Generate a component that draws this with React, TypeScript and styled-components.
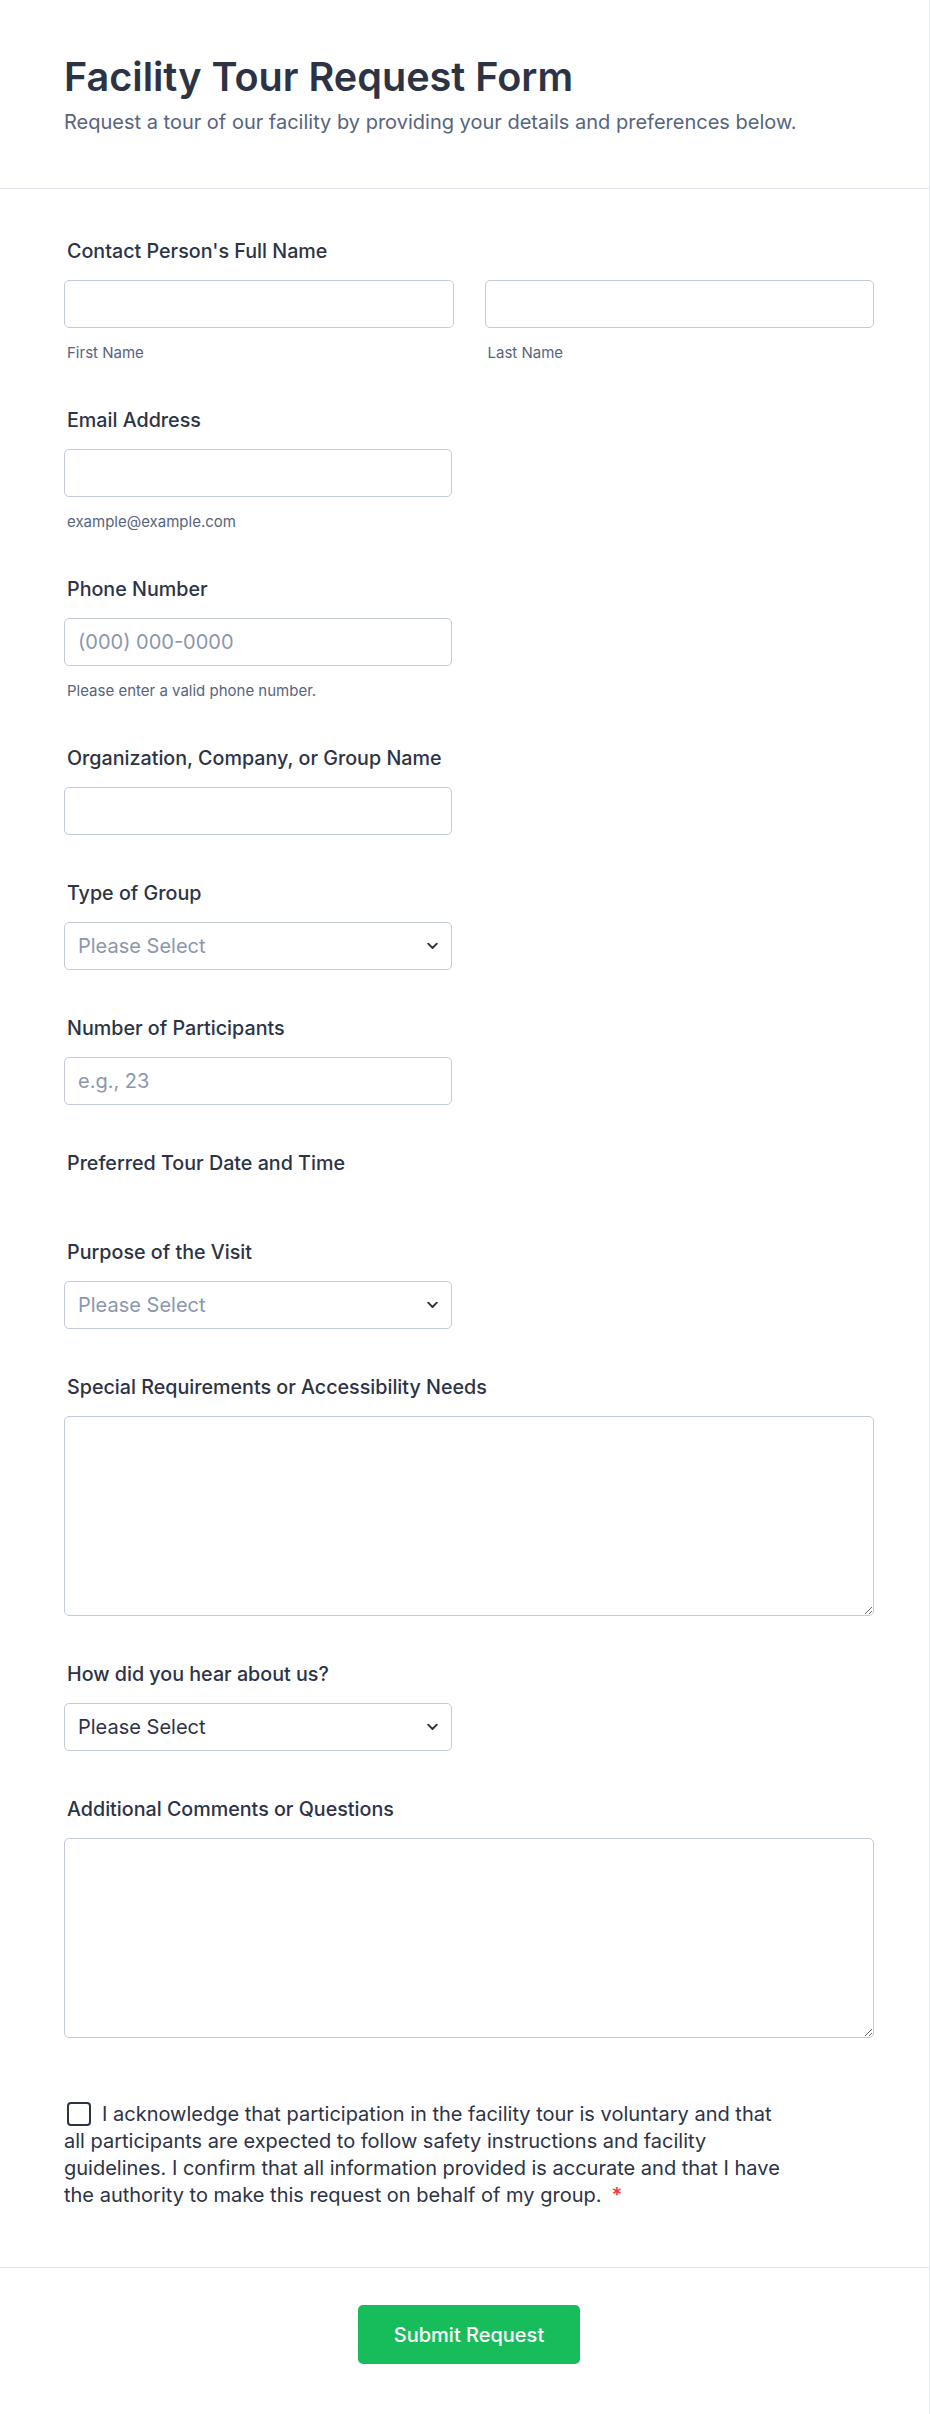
import styled, { createGlobalStyle } from 'styled-components';

const GlobalStyle = createGlobalStyle`
  * {
    box-sizing: border-box;
  }

  body {
    margin: 0;
    background: #fff;
    color: #2c3345;
    font-family: Inter, 'Noto Sans', sans-serif;
  }
`;

function Chevron() {
  return (
    <ChevronIcon width="11" height="7" viewBox="0 0 11 7" aria-hidden="true">
      <path
        d="M1.2 1.2l4.3 4.3 4.3-4.3"
        fill="none"
        stroke="#2c3345"
        strokeWidth="1.9"
        strokeLinecap="round"
        strokeLinejoin="round"
      />
    </ChevronIcon>
  );
}

function SelectBox({ muted }: { muted?: boolean }) {
  return (
    <SelectWrap>
      <Select defaultValue="" $muted={muted}>
        <option value="">Please Select</option>
      </Select>
      <Chevron />
    </SelectWrap>
  );
}

function App() {
  return (
    <>
      <GlobalStyle />
      <Page>
        <Header>
          <Title>Facility Tour Request Form</Title>
          <Subtitle>
            Request a tour of our facility by providing your details and
            preferences below.
          </Subtitle>
        </Header>

        <Body>
          <Field>
            <Label>Contact Person's Full Name</Label>
            <NameRow>
              <div>
                <Input type="text" />
                <SubLabel>First Name</SubLabel>
              </div>
              <div>
                <Input type="text" />
                <SubLabel>Last Name</SubLabel>
              </div>
            </NameRow>
          </Field>

          <Field>
            <Label>Email Address</Label>
            <Input type="email" $half />
            <SubLabel>example@example.com</SubLabel>
          </Field>

          <Field>
            <Label>Phone Number</Label>
            <Input type="tel" placeholder="(000) 000-0000" $half />
            <SubLabel>Please enter a valid phone number.</SubLabel>
          </Field>

          <Field>
            <Label>Organization, Company, or Group Name</Label>
            <Input type="text" $half />
          </Field>

          <Field>
            <Label>Type of Group</Label>
            <SelectBox muted />
          </Field>

          <Field>
            <Label>Number of Participants</Label>
            <Input type="text" placeholder="e.g., 23" $half />
          </Field>

          <Field>
            <Label>Preferred Tour Date and Time</Label>
            <DateSlot />
          </Field>

          <Field>
            <Label>Purpose of the Visit</Label>
            <SelectBox muted />
          </Field>

          <Field>
            <Label>Special Requirements or Accessibility Needs</Label>
            <TextArea />
          </Field>

          <Field>
            <Label>How did you hear about us?</Label>
            <SelectBox />
          </Field>

          <Field>
            <Label>Additional Comments or Questions</Label>
            <TextArea />
          </Field>

          <Consent>
            <ConsentText>
              <CheckBox type="checkbox" />
              I acknowledge that participation in the facility tour is voluntary
              and that all participants are expected to follow safety
              instructions and facility guidelines. I confirm that all
              information provided is accurate and that I have the authority to
              make this request on behalf of my group.
              <Required>*</Required>
            </ConsentText>
          </Consent>
        </Body>

        <Footer>
          <SubmitButton type="button">Submit Request</SubmitButton>
        </Footer>
      </Page>
    </>
  );
}

export default App;

const Page = styled.div`
  width: 930px;
  border-right: 1px solid #e6e8ef;
  background: #fff;
`;

const Header = styled.header`
  padding: 54px 55px 51px 64px;
  border-bottom: 1px solid #e3e5ec;
`;

const Title = styled.h1`
  margin: 0;
  font-size: 39.6px;
  font-weight: 600;
  line-height: 46px;
  color: #2c3345;
`;

const Subtitle = styled.p`
  margin: 7px 0 0;
  font-size: 20px;
  line-height: 30px;
  color: #57647e;
`;

const Body = styled.div`
  padding: 27px 55px 0 64px;
`;

const Field = styled.div`
  padding: 23px 0;
`;

const Label = styled.label`
  display: block;
  margin-bottom: 17px;
  padding-left: 3px;
  font-size: 19.7px;
  font-weight: 500;
  line-height: 24px;
  color: #2c3345;
`;

const NameRow = styled.div`
  display: grid;
  grid-template-columns: 1fr 1fr;
  column-gap: 31px;
`;

const Input = styled.input<{ $half?: boolean }>`
  display: block;
  width: ${({ $half }) => ($half ? '388px' : '100%')};
  height: 48px;
  padding: 0 13px;
  border: 1px solid #c3cad8;
  border-radius: 5px;
  background: #fff;
  font-family: inherit;
  font-size: 20px;
  color: #2c3345;
  outline: none;

  &::placeholder {
    color: #8c97ad;
  }
`;

const SubLabel = styled.span`
  display: block;
  margin-top: 16px;
  padding-left: 3px;
  font-size: 15px;
  line-height: 18px;
  color: #57647e;
`;

const DateSlot = styled.div`
  height: 2px;
`;

const SelectWrap = styled.div`
  position: relative;
  width: 388px;
`;

const Select = styled.select<{ $muted?: boolean }>`
  display: block;
  width: 100%;
  height: 48px;
  padding: 0 40px 0 13px;
  border: 1px solid #c3cad8;
  border-radius: 5px;
  background: #fff;
  appearance: none;
  font-family: inherit;
  font-size: 20px;
  color: ${({ $muted }) => ($muted ? '#8c97ad' : '#2c3345')};
  outline: none;
`;

const ChevronIcon = styled.svg`
  position: absolute;
  top: 50%;
  right: 14px;
  transform: translateY(-50%);
  pointer-events: none;
`;

const TextArea = styled.textarea`
  display: block;
  width: 100%;
  height: 200px;
  padding: 10px 13px;
  border: 1px solid #c3cad8;
  border-radius: 5px;
  background: #fff;
  font-family: inherit;
  font-size: 20px;
  color: #2c3345;
  outline: none;
`;

const Consent = styled.div`
  padding: 40px 0 58px;
`;

const ConsentText = styled.label`
  display: block;
  max-width: 720px;
  font-size: 20px;
  line-height: 27px;
  color: #2c3345;
`;

const CheckBox = styled.input`
  appearance: none;
  display: inline-block;
  width: 24px;
  height: 24px;
  margin: 1px 11px 0 3px;
  vertical-align: top;
  border: 2px solid #2c3345;
  border-radius: 4px;
  background: #fff;
`;

const Required = styled.span`
  margin-left: 10px;
  font-weight: 600;
  color: #f23a3c;
`;

const Footer = styled.footer`
  display: flex;
  justify-content: center;
  padding: 37px 55px 50px 64px;
  border-top: 1px solid #e3e5ec;
`;

const SubmitButton = styled.button`
  width: 222px;
  height: 59px;
  border: none;
  border-radius: 5px;
  background: #18bd5b;
  color: #fff;
  font-family: inherit;
  font-size: 20px;
  font-weight: 500;
  cursor: pointer;
`;
